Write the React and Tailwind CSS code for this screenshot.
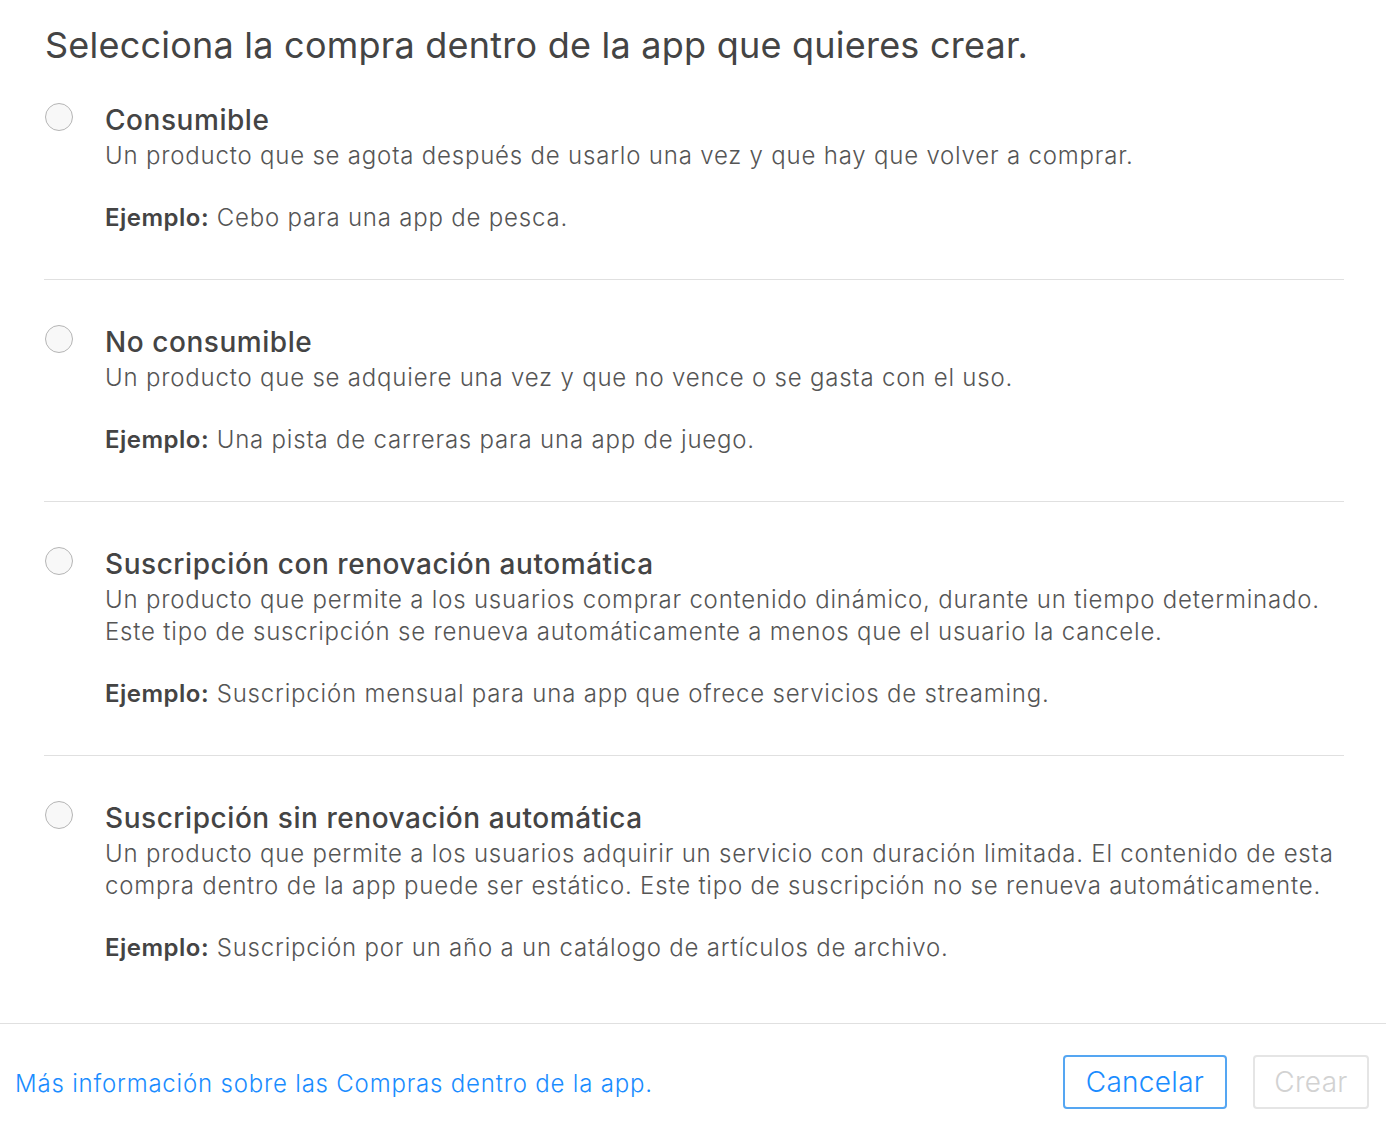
import React from "react";

const items = [
  {
    title: "Consumible",
    desc: ["Un producto que se agota después de usarlo una vez y que hay que volver a comprar."],
    ex: "Cebo para una app de pesca.",
  },
  {
    title: "No consumible",
    desc: ["Un producto que se adquiere una vez y que no vence o se gasta con el uso."],
    ex: "Una pista de carreras para una app de juego.",
  },
  {
    title: "Suscripción con renovación automática",
    desc: [
      "Un producto que permite a los usuarios comprar contenido dinámico, durante un tiempo determinado.",
      "Este tipo de suscripción se renueva automáticamente a menos que el usuario la cancele.",
    ],
    ex: "Suscripción mensual para una app que ofrece servicios de streaming.",
  },
  {
    title: "Suscripción sin renovación automática",
    desc: [
      "Un producto que permite a los usuarios adquirir un servicio con duración limitada. El contenido de esta",
      "compra dentro de la app puede ser estático. Este tipo de suscripción no se renueva automáticamente.",
    ],
    ex: "Suscripción por un año a un catálogo de artículos de archivo.",
  },
];

function Section({ item, first, last }) {
  return (
    <div
      className={
        (first ? "pt-[33px]" : "pt-[42px] border-t border-[#e0e0e0]") +
        (last ? " pb-[59px]" : " pb-[45px]") +
        " ml-[44px] mr-[42px] flex"
      }
    >
      <div className="w-[61px] shrink-0 pt-[3px] pl-[1px]">
        <div className="w-[28px] h-[28px] rounded-full border-[1.5px] border-[#b5b5b5] bg-[#f8f8f8]" />
      </div>
      <div className="flex flex-col">
        <div className="text-[28px] leading-[40px] font-medium text-[#444] tracking-[0.55px]">{item.title}</div>
        {item.desc.map((d, i) => (
          <div key={i} className="text-[24px] leading-[32px] font-light text-[#555] tracking-[0.8px] whitespace-nowrap">
            {d}
          </div>
        ))}
        <div className="mt-[30px] text-[24px] leading-[32px] font-light text-[#555] tracking-[0.8px]">
          <span className="font-semibold text-[#444] tracking-[0.5px]">Ejemplo:</span> {item.ex}
        </div>
      </div>
    </div>
  );
}

export default function App() {
  return (
    <div className="w-[1386px] h-[1128px] bg-white overflow-hidden" style={{ fontFamily: "Inter, 'Noto Sans', sans-serif" }}>
      <div className="pt-[23px] pl-[45px] text-[36px] leading-[44px] text-[#444] tracking-[0.23px]">
        Selecciona la compra dentro de la app que quieres crear.
      </div>
      <div className="flex flex-col">
        {items.map((it, i) => (
          <Section key={i} item={it} first={i === 0} last={i === items.length - 1} />
        ))}
      </div>
      <div className="border-t border-[#e0e0e0] flex items-center justify-between pl-[15px] pr-[17px] pt-[31px]">
        <a className="text-[24px] font-light text-[#1a8cff] tracking-[0.8px] pt-[4px]">Más información sobre las Compras dentro de la app.</a>
        <div className="flex gap-[26px]">
          <button className="w-[164px] h-[54px] rounded-[4px] border-2 border-[#55a6f2] text-[28px] font-light text-[#1a8cff] tracking-[0.3px]">
            Cancelar
          </button>
          <button className="w-[116px] h-[54px] rounded-[4px] border-2 border-[#e5e5e5] text-[28px] font-light text-[#d2d2d2] tracking-[0.3px]">
            Crear
          </button>
        </div>
      </div>
    </div>
  );
}
